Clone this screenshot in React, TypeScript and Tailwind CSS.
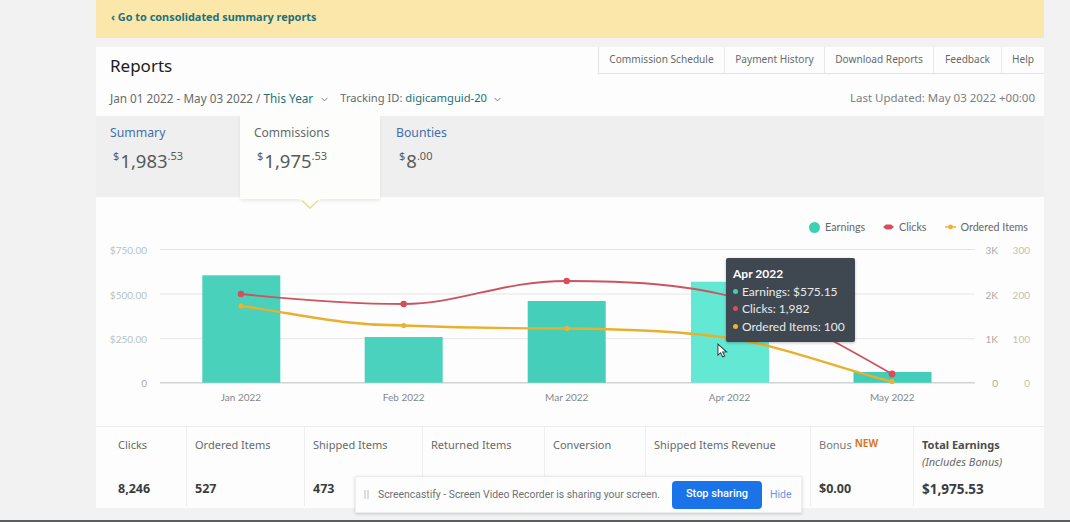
import { ChevronDown } from "lucide-react";

const navLinks = [
  { label: "Commission Schedule", width: "w-[125px]" },
  { label: "Payment History", width: "w-[100px]" },
  { label: "Download Reports", width: "w-[109px]" },
  { label: "Feedback", width: "w-[68px]" },
  { label: "Help", width: "w-[43px]" },
];

const bars = [
  { x: 202.3, top: 275.3, fill: "#49d1bc" },
  { x: 364.7, top: 337, fill: "#4bd2be" },
  { x: 527.7, top: 301, fill: "#45ceb9" },
  { x: 691, top: 281.7, fill: "#63e8d4" },
  { x: 853.5, top: 372, fill: "#41cdb7" },
];

const months = [
  { x: 241, label: "Jan 2022" },
  { x: 403.7, label: "Feb 2022" },
  { x: 566.7, label: "Mar 2022" },
  { x: 729.5, label: "Apr 2022" },
  { x: 892.3, label: "May 2022" },
];

const gridLines = [
  { y: 249.5, money: "$750.00", clicks: "3K", items: "300" },
  { y: 294, money: "$500.00", clicks: "2K", items: "200" },
  { y: 338.7, money: "$250.00", clicks: "1K", items: "100" },
  { y: 382.7, money: "0", clicks: "0", items: "0" },
];

const stats = [
  { label: "Clicks", value: "8,246" },
  { label: "Ordered Items", value: "527" },
  { label: "Shipped Items", value: "473" },
  { label: "Returned Items", value: "" },
  { label: "Conversion", value: "" },
  { label: "Shipped Items Revenue", value: "" },
];

const Amount = ({ whole, cents }: { whole: string; cents: string }) => (
  <div className="ml-[3px] mt-[5px] flex items-start text-[#555b5b]">
    <span className="mr-[1px] mt-[2px] text-[11px] leading-[14px]">$</span>
    <span className="mt-[1px] text-[18.5px] leading-[26px]">{whole}</span>
    <span className="mt-[2px] text-[11px] leading-[14px]">.{cents}</span>
  </div>
);

const Chart = () => (
  <svg
    viewBox="96 240 948 187"
    className="block h-[187px] w-[948px] font-['Lato',sans-serif]"
  >
    {gridLines.map((line) => (
      <g key={line.y}>
        <line
          x1="160"
          x2="975"
          y1={line.y}
          y2={line.y}
          stroke={line.money === "0" ? "#d0d3d3" : "#e4e6e6"}
          strokeWidth={line.money === "0" ? 1.5 : 1}
        />
        <text
          x="147"
          y={line.y + 4.5}
          textAnchor="end"
          fontSize="10"
          fill={line.money === "0" ? "#aaaaaa" : "#b3c6c2"}
        >
          {line.money}
        </text>
        <text x="998" y={line.y + 4.5} textAnchor="end" fontSize="10" fill="#a9a9a9">
          {line.clicks}
        </text>
        <text x="1030" y={line.y + 4.5} textAnchor="end" fontSize="10" fill="#c6c2ab">
          {line.items}
        </text>
      </g>
    ))}
    {bars.map((bar) => (
      <rect
        key={bar.x}
        x={bar.x}
        y={bar.top}
        width="78"
        height={382.7 - bar.top}
        fill={bar.fill}
      />
    ))}
    {months.map((m) => (
      <text
        key={m.label}
        x={m.x}
        y="401"
        textAnchor="middle"
        fontSize="10"
        fill="#858888"
      >
        {m.label}
      </text>
    ))}
    <path
      d="M241 294 C300 300 350 304 403.7 304 C460 304 500 281 566.7 281 C630 281 680 284 729.5 296 C775 307 845 347 892 374"
      fill="none"
      stroke="#c9555f"
      strokeWidth="1.8"
    />
    <path
      d="M241 306 C300 314 340 325.5 403.7 325.5 C470 328 520 328.5 566.7 328.5 C630 329 680 331 729.5 338 C790 348 850 372 892 381.5"
      fill="none"
      stroke="#e9b02e"
      strokeWidth="2.4"
    />
    <circle cx="241" cy="294" r="3.2" fill="#d64f58" />
    <circle cx="403.7" cy="304" r="3.2" fill="#d64f58" />
    <circle cx="566.7" cy="281" r="3.2" fill="#d64f58" />
    <circle cx="892" cy="374" r="3.4" fill="#d64f58" />
    <circle cx="241" cy="306" r="2.6" fill="#edb32c" />
    <circle cx="403.7" cy="325.5" r="2.6" fill="#edb32c" />
    <circle cx="566.7" cy="328.5" r="2.6" fill="#edb32c" />
    <circle cx="892" cy="381.5" r="2.6" fill="#edb32c" />
  </svg>
);

const TooltipRow = ({ color, text }: { color: string; text: string }) => (
  <div className="flex h-[17.5px] items-center gap-[4px]">
    <span className={`h-[5px] w-[5px] rounded-full ${color}`} />
    <span>{text}</span>
  </div>
);

export default function App() {
  return (
    <div className="relative flex h-[522px] w-[1070px] flex-col overflow-hidden bg-[#f2f2f3] font-['Noto_Sans',sans-serif]">
      <div className="flex-1 pl-[96px]">
        <div className="w-[948px]">
          <div className="flex h-[38px] items-start bg-[#fce7ab] pl-[15px] pt-[9px] text-[10.9px] font-bold leading-[16px] text-[#22717a]">
            ‹ Go to consolidated summary reports
          </div>

          <div className="mt-[9px] bg-[#fdfdfd]">
            <div className="relative h-[69px]">
              <div className="flex items-start justify-between">
                <h1 className="pl-[14px] pt-[6px] text-[17px] leading-[26px] text-[#1c1c1c]">
                  Reports
                </h1>
                <nav className="flex h-[27px] border-b border-l border-[#e2e3e3]">
                  {navLinks.map((link, i) => (
                    <a
                      key={link.label}
                      className={`flex items-center justify-center pb-[1px] text-[10.1px] text-[#666b6b] ${link.width} ${
                        i > 0 ? "border-l border-[#e8e9e9]" : ""
                      }`}
                    >
                      {link.label}
                    </a>
                  ))}
                </nav>
              </div>
              <div className="mt-[11px] flex items-center justify-between pl-[14px] pr-[9px] leading-[16px] text-[#666b6b]">
                <div className="flex items-center">
                  <span className="text-[11.75px]">
                    Jan 01 2022 - May 03 2022 /{" "}
                    <span className="text-[#22717a]">This Year</span>
                  </span>
                  <ChevronDown size={11} className="ml-[6px] mt-[3px] text-[#777]" />
                  <span className="ml-[10px] text-[11.2px]">
                    Tracking ID: <span className="text-[#22717a]">digicamguid-20</span>
                  </span>
                  <ChevronDown size={11} className="ml-[5px] mt-[3px] text-[#777]" />
                </div>
                <span className="text-[11.5px] text-[#7b7f7f]">
                  Last Updated: May 03 2022 +00:00
                </span>
              </div>
            </div>

            <div className="flex h-[81px] items-start bg-[#efefef]">
              <div className="w-[144px] pl-[14px] pt-[8px]">
                <div className="text-[12.25px] leading-[18px] text-[#3f6fb0]">Summary</div>
                <Amount whole="1,983" cents="53" />
              </div>
              <div className="relative z-10 h-[83px] w-[140px] bg-[#fdfdfb] pl-[14px] pt-[8px] shadow-[0_2px_3px_rgba(0,0,0,0.08)]">
                <div className="text-[12px] leading-[18px] text-[#666b6b]">Commissions</div>
                <Amount whole="1,975" cents="53" />
                <svg
                  viewBox="0 0 22 10"
                  className="absolute left-[59px] top-[83px] h-[10px] w-[22px]"
                >
                  <path d="M0 0 L11 9 L22 0 Z" fill="#fdfdfb" />
                  <path d="M3 1.5 L11 9 L19 1.5" fill="none" stroke="#e9d98a" strokeWidth="1.3" />
                </svg>
              </div>
              <div className="pl-[16px] pt-[8px]">
                <div className="text-[12.25px] leading-[18px] text-[#3f6fb0]">Bounties</div>
                <Amount whole="8" cents="00" />
              </div>
            </div>

            <div className="relative h-[230px] border-b border-[#ececec]">
              <div className="flex h-[43px] items-end justify-end gap-[18px] pb-[6px] pr-[16px] font-['Lato',sans-serif] text-[10.7px] leading-[14px] text-[#666]">
                <div className="flex items-center gap-[5px]">
                  <span className="h-[11px] w-[11px] rounded-full bg-[#3fcfb5]" />
                  Earnings
                </div>
                <div className="flex items-center gap-[5px]">
                  <svg viewBox="0 0 11 8" className="h-[8px] w-[11px]">
                    <path d="M0 4 L3 1.4 H8 L11 4 L8 6.6 H3 Z" fill="#d64f58" />
                  </svg>
                  Clicks
                </div>
                <div className="flex items-center gap-[5px]">
                  <svg viewBox="0 0 11 8" className="h-[8px] w-[11px]">
                    <path d="M0 4 H11" stroke="#edb32c" strokeWidth="1.5" />
                    <circle cx="5.5" cy="4" r="2.4" fill="#edb32c" />
                  </svg>
                  Ordered Items
                </div>
              </div>
              <Chart />

              <div className="absolute left-[630px] top-[61px] h-[84px] w-[129px] rounded-[2px] bg-[#3f4750] pl-[7px] pt-[7px] font-['Lato',sans-serif] text-[12px] leading-[17.5px] text-[#e8eaea] shadow-[0_1px_3px_rgba(0,0,0,0.25)]">
                <div className="font-bold text-white">Apr 2022</div>
                <TooltipRow color="bg-[#3fcfb5]" text="Earnings: $575.15" />
                <TooltipRow color="bg-[#d64f58]" text="Clicks: 1,982" />
                <TooltipRow color="bg-[#edb32c]" text="Ordered Items: 100" />
              </div>

              <svg
                viewBox="0 0 12 16"
                className="absolute left-[621px] top-[146px] h-[15px] w-[11px]"
              >
                <path
                  d="M1 1 L1 13 L4 10.4 L6.2 15 L8.4 14 L6.2 9.6 L10.4 9.4 Z"
                  fill="#ffffff"
                  stroke="#333b44"
                  strokeWidth="1.1"
                />
              </svg>
            </div>

            <div className="grid h-[81px] grid-cols-[90px_118px_118px_122px_101px_165px_103px_131px]">
              {stats.map((stat, i) => (
                <div
                  key={stat.label}
                  className={`h-[79px] pt-[9px] ${
                    i === 0 ? "pl-[22px]" : "border-l border-[#eeeeee] pl-[8px]"
                  }`}
                >
                  <div className="text-[11px] leading-[18px] text-[#666b6b]">{stat.label}</div>
                  <div className="mt-[26px] text-[12.5px] font-bold leading-[18px] text-[#3a3d3d]">
                    {stat.value}
                  </div>
                </div>
              ))}
              <div className="h-[79px] border-l border-[#eeeeee] pl-[8px] pt-[9px]">
                <div className="flex items-start text-[11px] leading-[18px] text-[#777b7b]">
                  Bonus
                  <span className="ml-[3px] text-[10px] font-bold leading-[15px] text-[#d9791f]">
                    NEW
                  </span>
                </div>
                <div className="mt-[26px] text-[12.5px] font-bold leading-[18px] text-[#3a3d3d]">
                  $0.00
                </div>
              </div>
              <div className="h-[79px] border-l border-[#eeeeee] pl-[8px] pt-[9px]">
                <div className="text-[11px] font-bold leading-[18px] text-[#4a4d4d]">
                  Total Earnings
                </div>
                <div className="mt-[1px] text-[11px] italic leading-[14px] text-[#666b6b]">
                  (Includes Bonus)
                </div>
                <div className="mt-[11px] text-[13.5px] font-bold leading-[18px] text-[#3a3d3d]">
                  $1,975.53
                </div>
              </div>
            </div>
          </div>
        </div>
      </div>

      <div className="h-[2px] bg-[#5b5d5f]" />

      <div className="absolute left-[355px] top-[476px] flex h-[37px] w-[447px] items-center border border-[#eceded] bg-[#fdfdfd] pl-[8px] font-['Roboto',sans-serif] text-[#6d7175] shadow-[0_1px_3px_rgba(0,0,0,0.18)]">
        <span className="mr-[9px] h-[9px] w-[5px] shrink-0 border-x-2 border-[#dcdcdc]" />
        <span className="w-[285px] shrink-0 whitespace-nowrap text-[10.4px]">
          Screencastify - Screen Video Recorder is sharing your screen.
        </span>
        <button className="ml-[9px] h-[28px] w-[90px] shrink-0 rounded-[4px] bg-[#1a73e8] text-[11px] font-medium text-white">
          Stop sharing
        </button>
        <a className="ml-[8px] text-[10.5px] text-[#6f94e6]">Hide</a>
      </div>
    </div>
  );
}
